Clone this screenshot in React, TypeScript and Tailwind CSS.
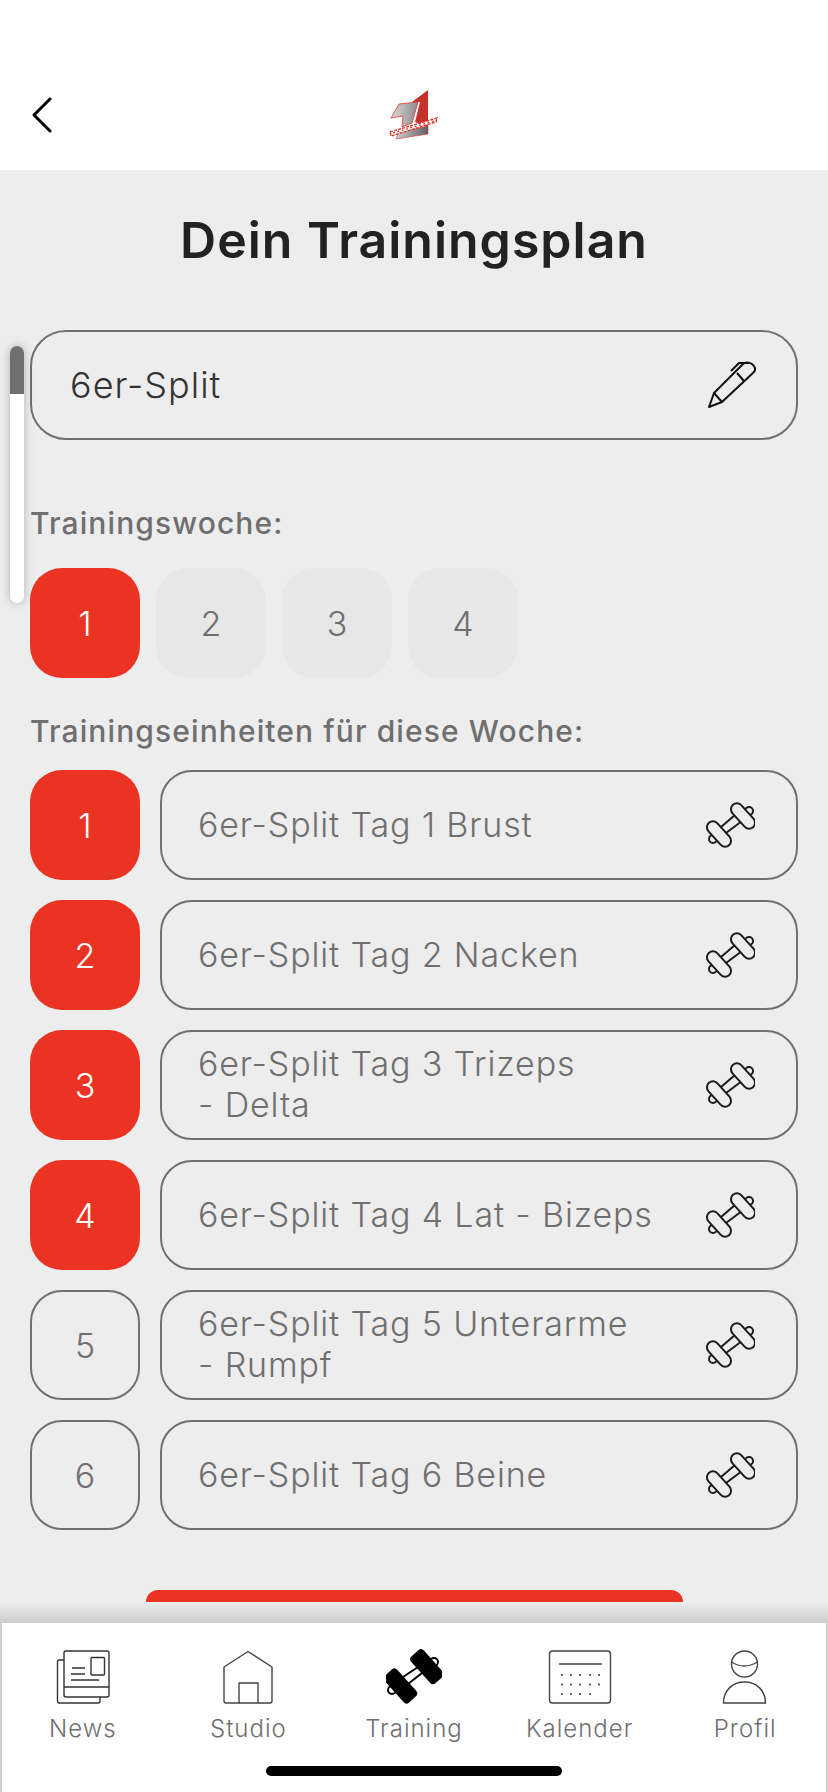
import React from "react";

const rows = [
  { n: 1, label: "6er-Split Tag 1 Brust", done: true },
  { n: 2, label: "6er-Split Tag 2 Nacken", done: true },
  { n: 3, label: "6er-Split Tag 3 Trizeps\n- Delta", done: true },
  { n: 4, label: "6er-Split Tag 4 Lat - Bizeps", done: true },
  { n: 5, label: "6er-Split Tag 5 Unterarme\n- Rumpf", done: false },
  { n: 6, label: "6er-Split Tag 6 Beine", done: false },
];

const Dumbbell = () => (
  <svg width="50" height="50" viewBox="15 15 50 50" fill="none" stroke="#1c1c1c" strokeWidth="2">
    <path d="M31 42 L45 30 M36 48 L52 36" />
    <circle cx="59" cy="26" r="4" fill="#ededed" />
    <circle cx="23" cy="54" r="4" fill="#ededed" />
    <rect x="-6" y="-15" width="12" height="30" rx="6" fill="#ededed" transform="translate(29 49) rotate(-42)" />
    <rect x="-6" y="-15" width="12" height="30" rx="6" fill="#ededed" transform="translate(53 31) rotate(-42)" />
  </svg>
);

const Pencil = () => (
  <svg width="50" height="50" viewBox="25 20 50 50" fill="none" stroke="#111" strokeWidth="2" strokeLinejoin="round">
    <path d="M28 67 L33 53 L62 24 Q66 21 71 24 Q76 28 73 32 L41 62 Z" />
    <path d="M33 53 L41 62 M56 33 L63 41 M50 31 L58 23 L68 23" />
  </svg>
);

const Logo = () => (
  <svg width="50" height="50" viewBox="390 90 50 50">
    <defs>
      <linearGradient id="steel" x1="0" x2="1">
        <stop offset="0" stopColor="#dcdcdc" />
        <stop offset="1" stopColor="#8a8a8a" />
      </linearGradient>
      <linearGradient id="steel2" x1="0" x2="1">
        <stop offset="0" stopColor="#cfcfcf" />
        <stop offset="1" stopColor="#5f5f5f" />
      </linearGradient>
    </defs>
    <path d="M413 102 L429 90 L429 127 L416 122 L421 102 Z" fill="#c4322c" />
    <path d="M392 118 L400 104 L419 102 L413 123 L403 127 L404 116 Z" fill="url(#steel)" stroke="#d8322c" strokeWidth="0.8" />
    <path d="M400 132 L429 126 L429 134 L397 139 Z" fill="url(#steel2)" stroke="#d8322c" strokeWidth="0.6" />
    <path d="M391 132 L438 118 L437 122 L392 136 Z" fill="#fff" stroke="#d8322c" strokeWidth="1.4" strokeDasharray="3 1.2" />
    <path d="M394 133 L435 121" stroke="#d8322c" strokeWidth="1.2" strokeDasharray="2 2.5" fill="none" />
  </svg>
);

const NewsIcon = () => (
  <svg width="56" height="58" viewBox="55 88 56 58" fill="none" stroke="#333" strokeWidth="1.4">
    <path d="M64 100 H59 Q57.5 100 57.5 102 V141 Q57.5 143 59 143 H98 Q100 143 100 141 V137" />
    <rect x="64" y="91" width="45" height="46" rx="2" />
    <path d="M64 127 H109 M72 108 H85 M71 114 H85 M71 120 H99" />
    <rect x="91" y="97.5" width="13.5" height="17.5" rx="1" />
  </svg>
);

const StudioIcon = () => (
  <svg width="52" height="56" viewBox="222 89 52 56" fill="none" stroke="#444" strokeWidth="1.4" strokeLinejoin="round">
    <path d="M226 143 Q224 143 224 141 V107 L248 91.5 L272 107 V141 Q272 143 270 143 Z" />
    <path d="M239 143 V123 H258 V143" />
  </svg>
);

const TrainingIcon = () => (
  <svg width="56" height="56" viewBox="386 1649 56 56" fill="none" stroke="#000" strokeWidth="2">
    <path d="M403 1677 L418 1667 M408 1684 L422 1673" />
    <circle cx="392" cy="1690" r="4" />
    <circle cx="434" cy="1662" r="4" />
    <rect x="-8.5" y="-18" width="17" height="36" rx="4" fill="#000" stroke="none" transform="translate(400.5 1686) rotate(-42)" />
    <rect x="-8.5" y="-18" width="17" height="36" rx="4" fill="#000" stroke="none" transform="translate(427 1666.7) rotate(-42)" />
  </svg>
);

const KalenderIcon = () => (
  <svg width="64" height="56" viewBox="546 89 64 56" fill="none" stroke="#444" strokeWidth="1.4">
    <rect x="547.5" y="91" width="61" height="52" rx="3" />
    <path d="M557 104 H600" />
    {[115, 124.5, 134].map((y, r) =>
      [560, 569, 578, 588, 597].slice(0, r === 2 ? 4 : 5).map((x) => <circle key={x + "-" + y} cx={x} cy={y} r="1" fill="#333" stroke="none" />)
    )}
  </svg>
);

const ProfilIcon = () => (
  <svg width="46" height="56" viewBox="722 89 46 56" fill="none" stroke="#444" strokeWidth="1.4">
    <circle cx="744.5" cy="104" r="13" />
    <path d="M731.5 102 Q744 110 757.5 102" />
    <path d="M723.5 143 C723.5 130 733 122 744.5 122 C756 122 765.5 130 765.5 143 Z" />
  </svg>
);

const tabs = [
  { label: "News", icon: <NewsIcon /> },
  { label: "Studio", icon: <StudioIcon /> },
  { label: "Training", icon: <TrainingIcon /> },
  { label: "Kalender", icon: <KalenderIcon /> },
  { label: "Profil", icon: <ProfilIcon /> },
];

export default function App() {
  return (
    <div className="relative flex h-[1792px] w-[828px] flex-col overflow-hidden bg-[#ededed] font-['Inter',sans-serif]">
      <header className="flex h-[170px] shrink-0 items-end justify-between bg-white px-[30px] pb-[30px]">
        <svg width="22" height="36" viewBox="0 0 22 36" fill="none" stroke="#000" strokeWidth="3" strokeLinecap="round" strokeLinejoin="round" className="mb-[7px]">
          <path d="M20 2 L4 18 L20 34" />
        </svg>
        <Logo />
        <div className="w-[22px]" />
      </header>

      <main className="flex min-h-0 flex-1 flex-col overflow-hidden px-[30px]">
        <h1 className="mt-[40px] text-center text-[50px] leading-[60px] font-semibold tracking-[1px] text-[#222]">Dein Trainingsplan</h1>

        <div className="mt-[60px] flex h-[110px] shrink-0 items-center justify-between rounded-[36px] border-2 border-[#707070] pr-[40px] pl-[38px]">
          <span className="text-[36px] font-light tracking-[1px] text-[#333]">6er-Split</span>
          <Pencil />
        </div>

        <p className="mt-[65px] text-[30px] leading-[36px] font-medium tracking-[1.1px] text-[#6f6f6f]">Trainingswoche:</p>
        <div className="mt-[27px] flex gap-[16px]">
          {[1, 2, 3, 4].map((w) => (
            <div
              key={w}
              className={
                w === 1
                  ? "flex h-[110px] w-[110px] items-center justify-center rounded-[32px] bg-[#ea3323] text-[34px] font-light text-white"
                  : "flex h-[110px] w-[110px] items-center justify-center rounded-[32px] bg-[#e7e7e7] text-[34px] font-light text-[#6f6f6f]"
              }
            >
              {w}
            </div>
          ))}
        </div>

        <p className="mt-[35px] text-[30px] leading-[36px] font-medium tracking-[1.1px] text-[#6f6f6f]">Trainingseinheiten für diese Woche:</p>
        <div className="mt-[21px] flex flex-col gap-[20px]">
          {rows.map((r) => (
            <div key={r.n} className="flex h-[110px] shrink-0 gap-[20px]">
              <div
                className={
                  r.done
                    ? "flex w-[110px] shrink-0 items-center justify-center rounded-[32px] bg-[#ea3323] text-[34px] font-light text-white"
                    : "flex w-[110px] shrink-0 items-center justify-center rounded-[32px] border-2 border-[#707070] text-[34px] font-light text-[#6f6f6f]"
                }
              >
                {r.n}
              </div>
              <div className="flex flex-1 items-center justify-between rounded-[32px] border-2 border-[#707070] pr-[41px] pl-[36px]">
                <span className="pb-[2px] text-[34px] leading-[41px] font-light tracking-[0.85px] whitespace-pre-line text-[#6f6f6f]">{r.label}</span>
                <Dumbbell />
              </div>
            </div>
          ))}
        </div>

        <div className="mx-auto mt-[60px] h-[12px] w-[537px] shrink-0 rounded-t-[18px] bg-[#ea3323]" />
      </main>

      <div className="absolute right-0 bottom-[169px] left-0 h-[21px] bg-gradient-to-b from-[#ededed] to-[#cccccc]" />
      <nav className="absolute right-0 bottom-0 left-0 h-[169px] bg-white shadow-[inset_2px_0_0_#cfcfcf,inset_-2px_0_0_#cfcfcf]">
        <div className="grid grid-cols-5 pt-[26px]">
          {tabs.map((t) => (
            <div key={t.label} className="flex flex-col items-center">
              <div className="flex h-[56px] items-center justify-center">{t.icon}</div>
              <span className="mt-[9px] text-[24px] leading-[30px] font-light tracking-[1px] text-[#6f6f6f]">{t.label}</span>
            </div>
          ))}
        </div>
        <div className="absolute bottom-[16px] left-1/2 h-[10px] w-[296px] -translate-x-1/2 rounded-full bg-black" />
      </nav>

      <div className="absolute top-[346px] left-[10px] h-[257px] w-[14px] overflow-hidden rounded-full bg-white shadow-[0_0_10px_rgba(0,0,0,0.25)]">
        <div className="h-[48px] bg-[#6f6f6f]" />
      </div>
    </div>
  );
}
